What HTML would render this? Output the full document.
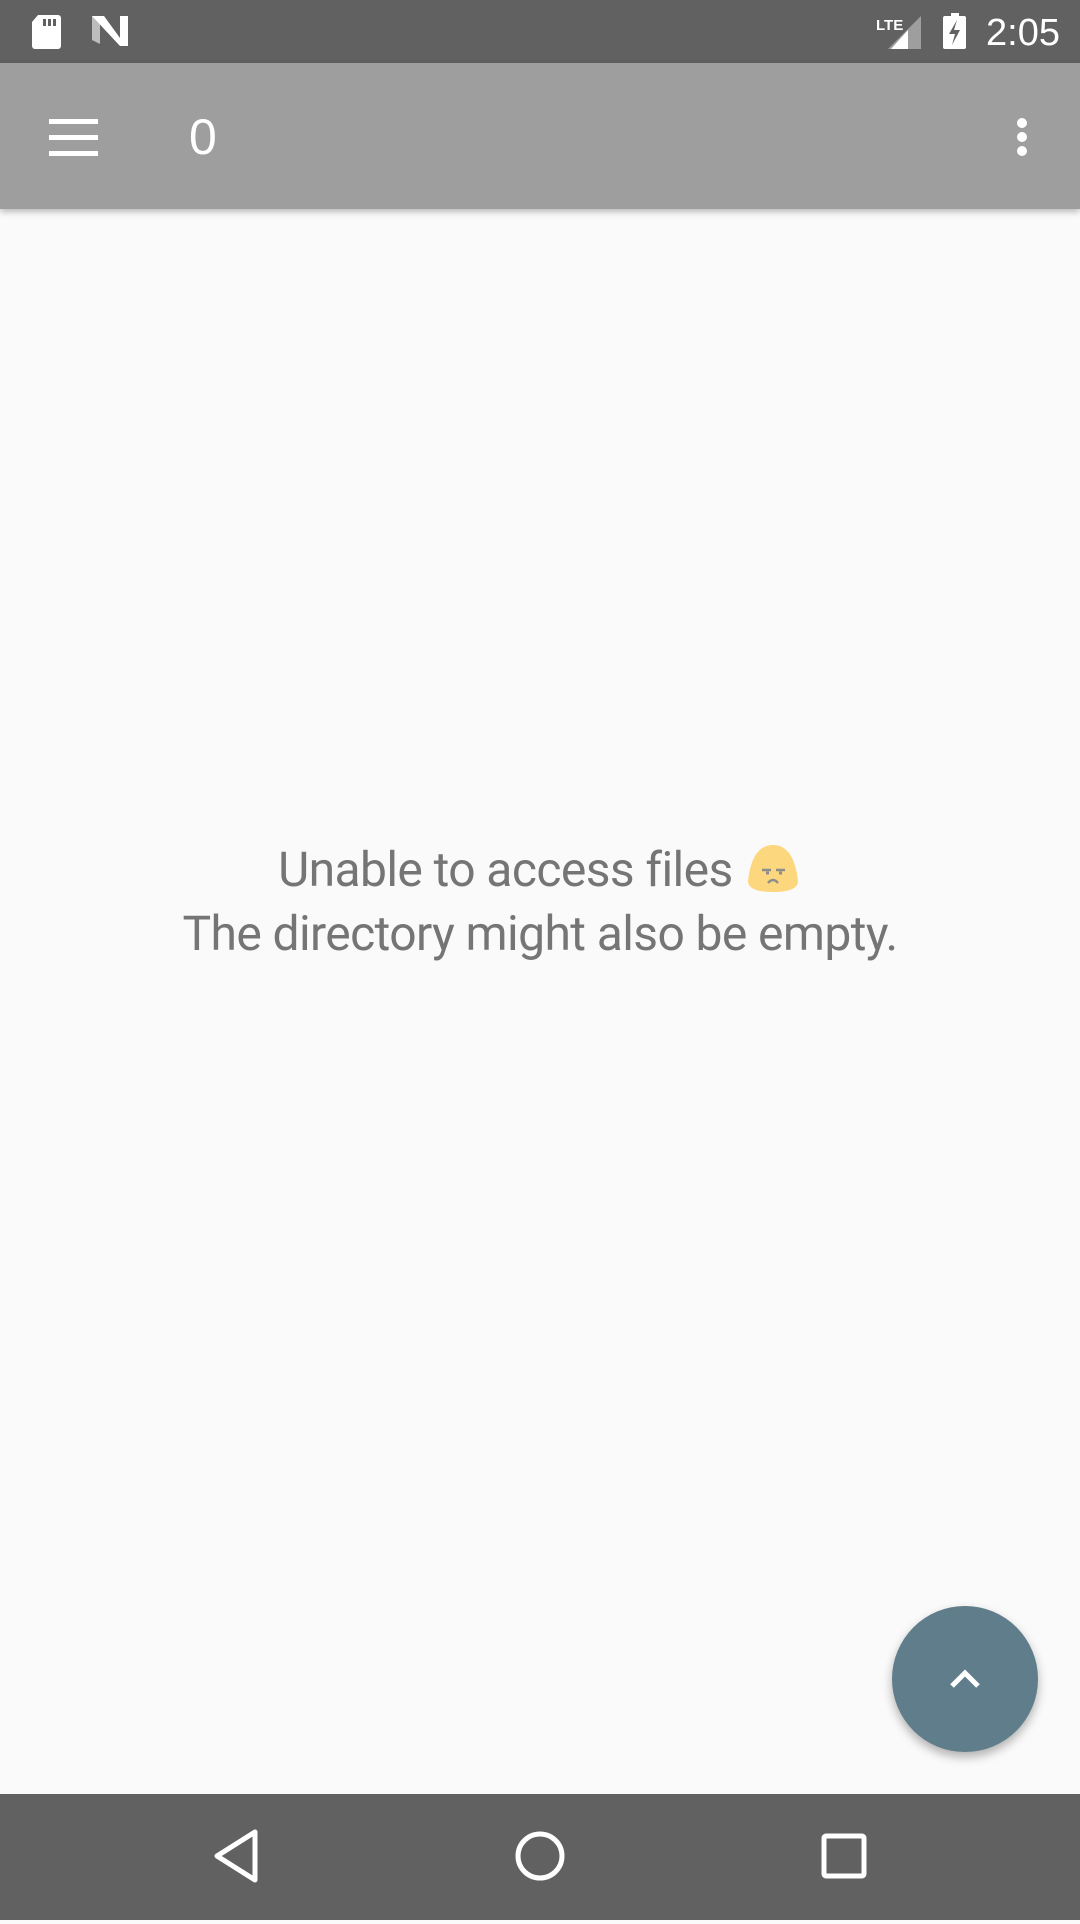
<!DOCTYPE html>
<html><head><meta charset="utf-8"><style>
html,body{margin:0;padding:0;width:1080px;height:1920px;overflow:hidden;background:#fafafa;font-family:"Roboto","Liberation Sans",sans-serif;}
.sb{position:absolute;left:0;top:0;width:1080px;height:63px;background:#616161;}
.ab{position:absolute;left:0;top:63px;width:1080px;height:146px;background:#9e9e9e;box-shadow:0 3px 6px rgba(0,0,0,.25);}
.nb{position:absolute;left:0;top:1794px;width:1080px;height:126px;background:#616161;}
.msg{position:absolute;left:0;top:838px;width:1080px;text-align:center;color:#757575;font-size:48px;line-height:64px;letter-spacing:-0.6px;}
.fab{position:absolute;left:892px;top:1606px;width:146px;height:146px;border-radius:50%;background:#607d8b;box-shadow:0 5px 10px rgba(0,0,0,.3);}
</style></head><body>
<div class="sb">
<svg width="1080" height="63" style="position:absolute;left:0;top:0">
<path d="M38 15 H58 a3 3 0 0 1 3 3 V46 a3 3 0 0 1 -3 3 H35 a3 3 0 0 1 -3 -3 V22 Z" fill="#fff"/>
<rect x="43" y="19" width="3" height="7" fill="#616161"/><rect x="48" y="19" width="3" height="7" fill="#616161"/><rect x="53" y="19" width="3" height="7" fill="#616161"/>
<path d="M92 16 L100 16 L100 44 L92 40 Z" fill="#bdbdbd"/>
<path d="M92 16 L104 16 L120 38 L120 16 L128 16 L128 46 L120 46 Z" fill="#fff"/>
<path d="M921 16 V49 H888 Z" fill="#9e9e9e"/><path d="M908 30 V49 H891 Z" fill="#fff"/>
<text x="876" y="30" font-size="15" fill="#fff" font-family="Liberation Sans" font-weight="bold">LTE</text>
<rect x="951" y="13" width="8" height="4" fill="#fff"/>
<rect x="943" y="16" width="23" height="33" rx="2" fill="#fff"/>
<path d="M957 20 L949 34 H955 L952 45 L960 30 H954 Z" fill="#616161"/>
<text x="986" y="45" font-size="38" fill="#fff" font-family="Liberation Sans">2:05</text>
</svg>
</div>
<div class="ab">
<svg width="1080" height="146" style="position:absolute;left:0;top:0">
<rect x="49" y="56" width="49" height="5" fill="#fff"/><rect x="49" y="72" width="49" height="5" fill="#fff"/><rect x="49" y="88" width="49" height="5" fill="#fff"/>
<text x="189" y="91" font-size="50" fill="#fff" font-family="Liberation Sans">0</text>
<circle cx="1022" cy="60" r="5" fill="#fff"/><circle cx="1022" cy="74" r="5" fill="#fff"/><circle cx="1022" cy="88" r="5" fill="#fff"/>
</svg>
</div>
<div class="msg">Unable to access files <svg width="58" height="52" viewBox="0 0 58 50" style="vertical-align:-8px"><path d="M29 2 C12 2 6 20 4 38 C4 46 14 49 29 49 C44 49 54 46 54 38 C52 20 46 2 29 2 Z" fill="#fdd77d"/><path d="M18 27 H27 M32 27 H41" stroke="#8d8d8d" stroke-width="2.5"/><path d="M22 30 h3 M35 30 h3" stroke="#8d8d8d" stroke-width="3"/><path d="M24 40 Q29 34 34 40" stroke="#8d8d8d" stroke-width="2.5" fill="none"/></svg><br>The directory might also be empty.</div>
<div class="fab"><svg width="146" height="146"><path d="M60 80 L73 67 L86 80" stroke="#fff" stroke-width="5" fill="none"/></svg></div>
<div class="nb">
<svg width="1080" height="126">
<path d="M255 38 V86 L217 62 Z" fill="none" stroke="#fff" stroke-width="5" stroke-linejoin="round"/>
<circle cx="540" cy="62" r="22" fill="none" stroke="#fff" stroke-width="5"/>
<rect x="824" y="42" width="40" height="40" rx="2" fill="none" stroke="#fff" stroke-width="5"/>
</svg>
</div>
</body></html>
